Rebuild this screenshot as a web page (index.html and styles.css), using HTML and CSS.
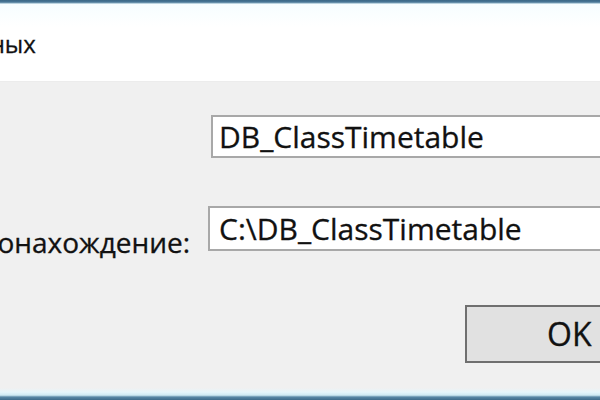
FILE: index.html
```html
<!DOCTYPE html>
<html lang="ru">
<head>
<meta charset="utf-8">
<title>Создание базы данных</title>
<link rel="stylesheet" href="styles.css">
</head>
<body>
<div class="window">
  <div class="frame-top"></div>
  <div class="header"><span class="title">Создание базы данных</span></div>
  <div class="content">
    <div class="form">
      <label class="label label-name">Имя:</label>
      <div class="field field-name">DB_ClassTimetable</div>
      <label class="label label-path">Местонахождение:</label>
      <div class="field field-path">C:\DB_ClassTimetable</div>
    </div>
    <div class="actions">
      <button class="btn">OK</button>
    </div>
  </div>
  <div class="frame-bottom"></div>
</div>
</body>
</html>
```

FILE: styles.css
```css
* { box-sizing: border-box; }
html, body { margin: 0; padding: 0; }
body {
  width: 600px;
  height: 400px;
  overflow: hidden;
  background: #f0f0f0;
  font-family: "Open Sans", "Noto Sans", sans-serif;
  color: #111111;
  -webkit-text-stroke: 0.3px #111111;
}
.window {
  width: 600px;
  height: 400px;
  display: flex;
  flex-direction: column;
  overflow: hidden;
}
.frame-top {
  height: 4px;
  flex: none;
  background: linear-gradient(#3a6685 0, #4a7898 55%, #e6f6fb 100%);
}
.header {
  width: 600px;
  height: 78px;
  flex: none;
  background: linear-gradient(#f6fdff, #ffffff 30%, #ffffff);
  border-bottom: 1px solid #ececec;
  display: flex;
  align-items: center;
}
.title {
  font-size: 24px;
  white-space: nowrap;
  line-height: 30px;
  margin-top: 2px;
  margin-left: -235px;
}
.content {
  flex: 1;
  padding-top: 33px;
  display: flex;
  flex-direction: column;
}
.form {
  display: grid;
  grid-template-columns: 280px 420px;
  row-gap: 48px;
  margin-left: -70px;
  align-items: end;
}
.label {
  font-size: 28px;
  line-height: 34px;
  white-space: nowrap;
  margin-bottom: -8px;
}
.field {
  background: #ffffff;
  border: 2px solid #a8a8a8;
  font-size: 30px;
  line-height: 39px;
  padding-left: 6px;
  white-space: nowrap;
}
.field-name { height: 43px; margin-left: 1px; }
.field-path { height: 45px; margin-left: -2px; line-height: 41px; padding-left: 9px; }
.actions {
  margin-top: 54px;
  padding-left: 465px;
  display: flex;
}
.btn {
  width: 160px;
  height: 58px;
  flex: none;
  background: #e1e1e1;
  border: 2px solid #6f6f6f;
  font-family: inherit;
  font-size: 32px;
  color: #111111;
  -webkit-text-stroke: 0.3px #111111;
  text-align: left;
  padding: 0 0 0 80px;
  line-height: 52px;
}
.frame-bottom {
  height: 12px;
  flex: none;
  background: linear-gradient(#f0f0f0 0, #e6f6fb 35%, #cfe9f2 60%, #5a88a6 75%, #3e6b8a 100%);
}
```
